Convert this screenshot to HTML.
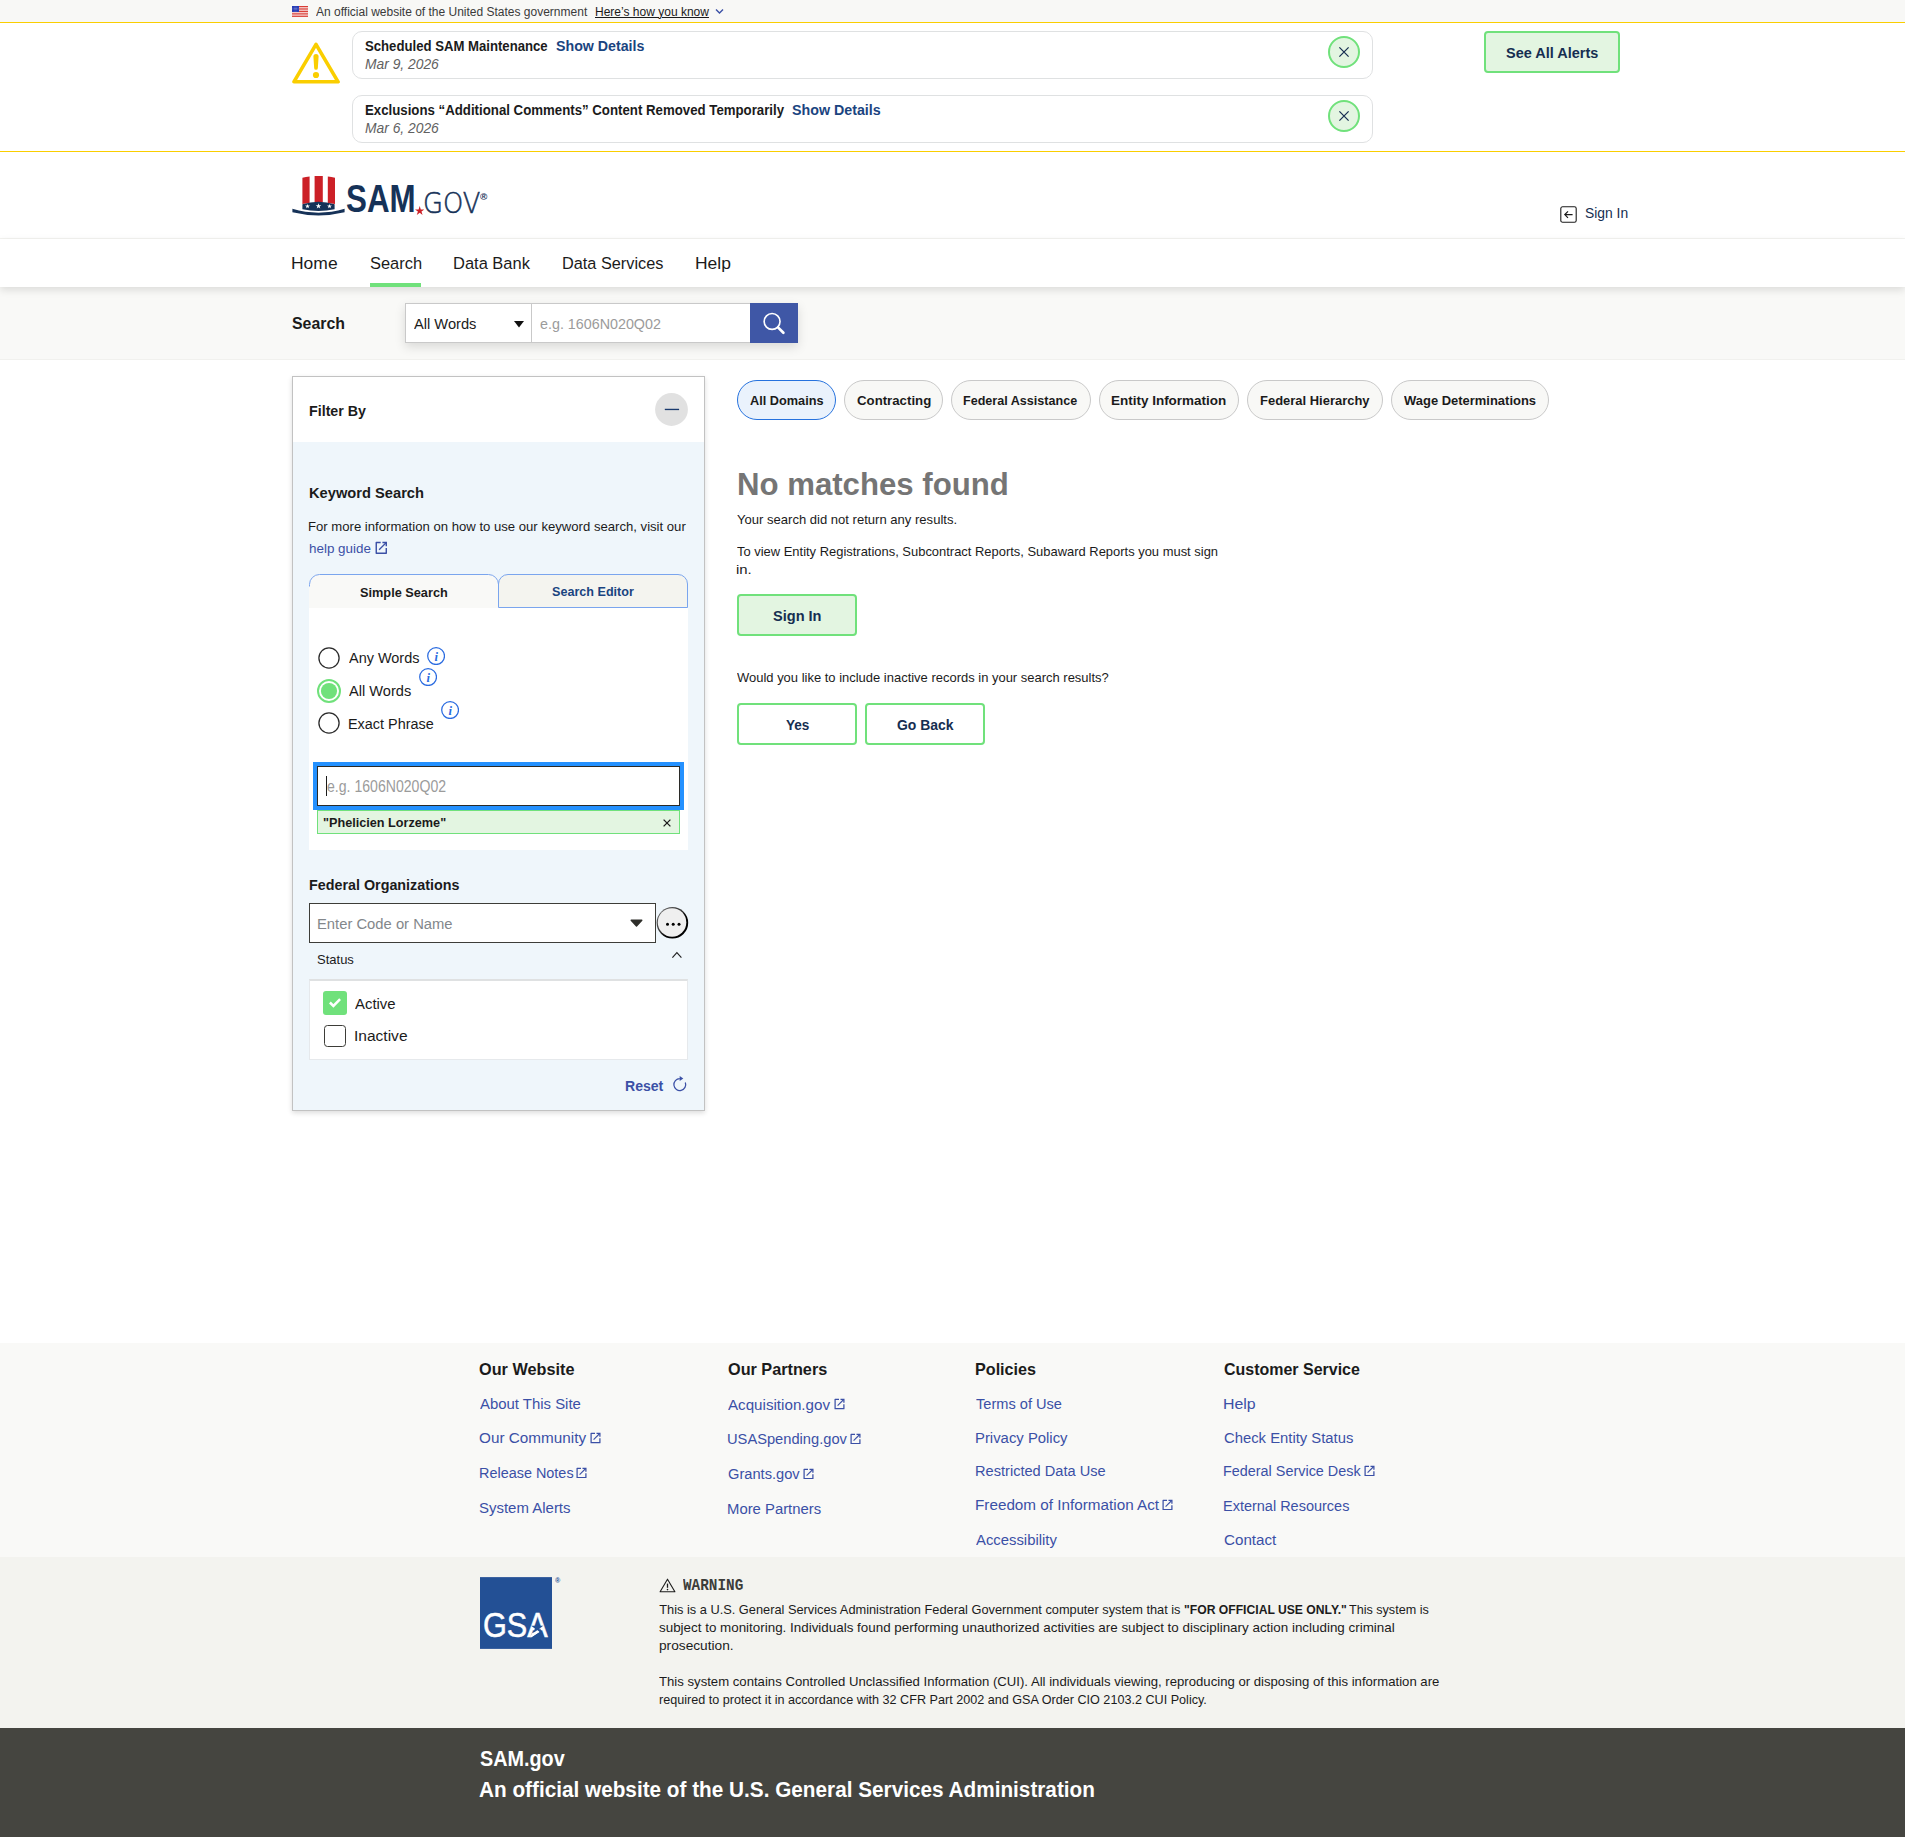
<!DOCTYPE html>
<html lang="en">
<head>
<meta charset="utf-8">
<title>SAM.gov | Search</title>
<style>
html,body{margin:0;padding:0}
body{width:1905px;height:1837px;position:relative;overflow:hidden;background:#fff;font-family:"Liberation Sans", sans-serif;color:#1b1b1b}
.b{position:absolute;box-sizing:border-box;display:block}
.t{position:absolute;white-space:nowrap;transform-origin:0 0;line-height:1.2;display:block;margin:0;padding:0}
a{text-decoration:none;color:inherit}
</style>
</head>
<body>
<section aria-label="Official government website">
<div class="b" style="left:0px;top:0px;width:1905px;height:22px;background:#f8f8f6"></div>
<svg class="b" style="left:292px;top:6px;" width="16" height="11" viewBox="0 0 16 11"><rect width="16" height="11" fill="#fff"/><rect y="0.00" width="16" height="0.95" fill="#d6322b"/><rect y="1.69" width="16" height="0.95" fill="#d6322b"/><rect y="3.38" width="16" height="0.95" fill="#d6322b"/><rect y="5.08" width="16" height="0.95" fill="#d6322b"/><rect y="6.77" width="16" height="0.95" fill="#d6322b"/><rect y="8.46" width="16" height="0.95" fill="#d6322b"/><rect y="10.15" width="16" height="0.95" fill="#d6322b"/><rect width="7" height="6" fill="#1e33b1"/><circle cx="1.00" cy="1.00" r="0.3" fill="#fff"/><circle cx="1.00" cy="2.35" r="0.3" fill="#fff"/><circle cx="1.00" cy="3.70" r="0.3" fill="#fff"/><circle cx="1.00" cy="5.05" r="0.3" fill="#fff"/><circle cx="2.25" cy="1.00" r="0.3" fill="#fff"/><circle cx="2.25" cy="2.35" r="0.3" fill="#fff"/><circle cx="2.25" cy="3.70" r="0.3" fill="#fff"/><circle cx="2.25" cy="5.05" r="0.3" fill="#fff"/><circle cx="3.50" cy="1.00" r="0.3" fill="#fff"/><circle cx="3.50" cy="2.35" r="0.3" fill="#fff"/><circle cx="3.50" cy="3.70" r="0.3" fill="#fff"/><circle cx="3.50" cy="5.05" r="0.3" fill="#fff"/><circle cx="4.75" cy="1.00" r="0.3" fill="#fff"/><circle cx="4.75" cy="2.35" r="0.3" fill="#fff"/><circle cx="4.75" cy="3.70" r="0.3" fill="#fff"/><circle cx="4.75" cy="5.05" r="0.3" fill="#fff"/><circle cx="6.00" cy="1.00" r="0.3" fill="#fff"/><circle cx="6.00" cy="2.35" r="0.3" fill="#fff"/><circle cx="6.00" cy="3.70" r="0.3" fill="#fff"/><circle cx="6.00" cy="5.05" r="0.3" fill="#fff"/></svg>
<svg class="b" style="left:714.5px;top:8px;" width="9" height="7" viewBox="0 0 9 7"><path d="M1 1.5l3.5 3.5 3.5-3.5" fill="none" stroke="#3b50a6" stroke-width="1.4"/></svg>
<span class="t" style="left:316.18px;top:4.75px;font-size:12.5px;color:#3a3a3a;transform:scaleX(0.9598);">An official website of the United States government</span>
<span class="t" style="left:594.61px;top:4.75px;font-size:12.5px;transform:scaleX(0.9609);text-decoration:underline;text-underline-offset:1px;">Here’s how you know</span>
</section>
<section aria-label="Alerts">
<div class="b" style="left:0px;top:22px;width:1905px;height:130px;background:#fff;border-top:1px solid #face00;border-bottom:1px solid #face00"></div>
<svg class="b" style="left:292px;top:42px;" width="48" height="42" viewBox="0 0 48 42"><path d="M24 2.3 46.1 39.8H1.9Z" fill="none" stroke="#face00" stroke-width="3.6" stroke-linejoin="round"/><path d="M21.4 14.6a2.6 2.6 0 0 1 5.2 0l-.75 11.4a1.85 1.85 0 0 1-3.7 0z" fill="#face00"/><circle cx="24" cy="33" r="3.1" fill="#face00"/></svg>
<div class="b" style="left:352px;top:31px;width:1021px;height:48px;border:1px solid #dfe1e2;border-radius:10px;background:#fff"></div>
<div class="b" style="left:352px;top:95px;width:1021px;height:48px;border:1px solid #dfe1e2;border-radius:10px;background:#fff"></div>
<svg class="b" style="left:1328px;top:36px;" width="32" height="32" viewBox="0 0 32 32"><circle cx="16" cy="16" r="15" fill="#e3f5e1" stroke="#70e17b" stroke-width="2"/><path d="M11.4 11.4l9.2 9.2M20.6 11.4l-9.2 9.2" stroke="#162e51" stroke-width="1.25" fill="none"/></svg>
<svg class="b" style="left:1328px;top:100px;" width="32" height="32" viewBox="0 0 32 32"><circle cx="16" cy="16" r="15" fill="#e3f5e1" stroke="#70e17b" stroke-width="2"/><path d="M11.4 11.4l9.2 9.2M20.6 11.4l-9.2 9.2" stroke="#162e51" stroke-width="1.25" fill="none"/></svg>
<div class="b" style="left:1484px;top:31px;width:136px;height:42px;border:2px solid #70e17b;border-radius:4px;background:#e3f5e1"></div>
<span class="t" style="left:365.32px;top:37.75px;font-size:14.0px;font-weight:700;transform:scaleX(0.9390);">Scheduled SAM Maintenance</span>
<span class="t" style="left:556.19px;top:37.75px;font-size:14.0px;font-weight:700;color:#1a4480;transform:scaleX(1.0144);">Show Details</span>
<span class="t" style="left:364.87px;top:55.00px;font-size:15.2px;color:#616161;font-style:italic;transform:scaleX(0.9107);">Mar 9, 2026</span>
<span class="t" style="left:364.81px;top:101.75px;font-size:14.0px;font-weight:700;transform:scaleX(0.9457);">Exclusions “Additional Comments” Content Removed Temporarily</span>
<span class="t" style="left:792.39px;top:101.75px;font-size:14.0px;font-weight:700;color:#1a4480;transform:scaleX(1.0178);">Show Details</span>
<span class="t" style="left:364.87px;top:118.90px;font-size:15.2px;color:#616161;font-style:italic;transform:scaleX(0.9107);">Mar 6, 2026</span>
<span class="t" style="left:1506.28px;top:44.90px;font-size:14.2px;font-weight:700;color:#162e51;transform:scaleX(1.0209);">See All Alerts</span>
</section>
<header>
<svg class="b" style="left:292px;top:175px;" width="53" height="41" viewBox="0 0 53 41"><path d="M10.4 29V2.7Q13.8 1.8 17.6 1.4V28Z" fill="#cc2027"/><path d="M22.6 27.5V1.1Q26.7 0.8 30.8 1.1V27.5Z" fill="#cc2027"/><path d="M35.8 28V1.4Q39.6 1.8 43 2.7V29Z" fill="#cc2027"/><path d="M10.4 34.2V29.2Q26.5 24.2 42.6 29.2V34.2Q26.5 37.6 10.4 34.2Z" fill="#163258"/><path d="M0.4 33.8Q26.5 41.5 52.6 33.8V37.3Q26.5 43.6 0.4 37.3Z" fill="#163258"/><g fill="#fff"><path d="M15.5 28.9l.6 1.7h1.8l-1.45 1.05.55 1.7-1.5-1.05-1.5 1.05.55-1.7L13.1 30.6h1.8z"/><path d="M26.5 28.3l.7 2h2.1l-1.7 1.2.65 2-1.75-1.25-1.75 1.25.65-2-1.7-1.2h2.1z"/><path d="M37.5 28.9l.6 1.7h1.8l-1.45 1.05.55 1.7-1.5-1.05-1.5 1.05.55-1.7-1.45-1.05h1.8z"/></g></svg>
<svg class="b" style="left:415px;top:206.4px;" width="9.4" height="9" viewBox="0 0 9.4 9"><path d="M4.7 0l1.1 3.4h3.6L6.5 5.5l1.1 3.4L4.7 6.8 1.8 8.9l1.1-3.4L0 3.4h3.6z" fill="#cc2027"/></svg>
<svg class="b" style="left:1560px;top:206px;" width="17" height="17" viewBox="0 0 17 17"><rect x="0.8" y="0.8" width="15.4" height="15.4" rx="1.8" fill="none" stroke="#1b1b1b" stroke-width="1.1"/><path d="M12.6 8.6H5M8 5.4 4.8 8.6 8 11.8" fill="none" stroke="#1b1b1b" stroke-width="1.2"/></svg>
<div class="b" style="left:0px;top:238px;width:1905px;height:1px;background:#f4f4f1"></div>
<span class="t" style="left:346.3px;top:176.20px;font-size:38.2px;font-weight:700;color:#163258;transform:scaleX(0.8202);">SAM</span>
<span class="t" style="left:423.25px;top:185.60px;font-size:29.2px;font-weight:200;color:#163258;font-family:'DejaVu Sans Light','DejaVu Sans',sans-serif;transform:scaleX(0.8826);-webkit-text-stroke:0.55px #163258;">GOV</span>
<span class="t" style="left:479.85px;top:190.80px;font-size:9.5px;font-weight:700;color:#163258;transform:scaleX(1.0436);">®</span>
<span class="t" style="left:1585.37px;top:204.60px;font-size:14.8px;color:#162e51;transform:scaleX(0.9360);">Sign In</span>
</header>
<nav>
<div class="b" style="left:0px;top:287px;width:1905px;height:73px;background:#f9f9f7;border-bottom:1px solid #f1f1ee"></div>
<div class="b" style="left:0px;top:239px;width:1905px;height:48px;background:#fff;box-shadow:0 3px 8px rgba(0,0,0,.12)"></div>
<div class="b" style="left:370px;top:283px;width:50.6px;height:4px;background:#70e17b"></div>
<a class="t" style="left:291.42px;top:253.70px;font-size:17.1px;transform:scaleX(1.0219);">Home</a>
<a class="t" style="left:369.55px;top:253.70px;font-size:17.1px;transform:scaleX(0.9620);">Search</a>
<a class="t" style="left:452.85px;top:253.70px;font-size:17.1px;transform:scaleX(0.9637);">Data Bank</a>
<a class="t" style="left:561.96px;top:253.70px;font-size:17.1px;transform:scaleX(0.9532);">Data Services</a>
<a class="t" style="left:694.97px;top:253.70px;font-size:17.1px;transform:scaleX(1.0201);">Help</a>
</nav>
<form role="search">
<div class="b" style="left:405px;top:303px;width:393px;height:40px;background:#fff;box-shadow:0 4px 10px rgba(0,0,0,.13)"></div>
<div class="b" style="left:405px;top:303px;width:127px;height:40px;background:#fff;border:1px solid #c9c9c9"></div>
<div class="b" style="left:531px;top:303px;width:220px;height:40px;background:#fff;border:1px solid #c9c9c9"></div>
<div class="b" style="left:750px;top:303px;width:48px;height:40px;background:#3f57a6"></div>
<svg class="b" style="left:514px;top:321.4px;" width="10" height="6.4" viewBox="0 0 10 6.4"><path d="M0 0h10L5 6.4z" fill="#111"/></svg>
<svg class="b" style="left:762px;top:312px;" width="24" height="24" viewBox="0 0 24 24"><circle cx="10.08" cy="9.46" r="7.95" fill="none" stroke="#fff" stroke-width="1.65"/><path d="M16 15.4l5.4 5.4" stroke="#fff" stroke-width="2.7" stroke-linecap="round"/></svg>
<span class="t" style="left:292.34px;top:313.55px;font-size:17.1px;font-weight:700;transform:scaleX(0.9286);">Search</span>
<span class="t" style="left:414.07px;top:315.55px;font-size:14.8px;transform:scaleX(0.9907);">All Words</span>
<span class="t" style="left:539.59px;top:315.55px;font-size:14.8px;color:#9b9b9b;transform:scaleX(0.9669);">e.g. 1606N020Q02</span>
</form>
<aside>
<div class="b" style="left:292px;top:376px;width:413px;height:735px;background:#eff6fb;border:1px solid #c2c2c2;box-shadow:0 2px 5px rgba(0,0,0,.14)"></div>
<div class="b" style="left:293px;top:377px;width:411px;height:65px;background:#fff"></div>
<svg class="b" style="left:655px;top:393px;" width="33" height="33" viewBox="0 0 33 33"><circle cx="16.5" cy="16.5" r="16.4" fill="#e1e1e1"/><path d="M9.8 16.45h14.3" stroke="#1a3a6e" stroke-width="1.35"/></svg>
<svg class="b" style="left:374.74px;top:541.3px;" width="12.54" height="13.22" viewBox="0 0 11 11.6"><path d="M5 1.26H1.1V10.7H9.9V6.2" fill="none" stroke="#3b50a6" stroke-width="1.25" stroke-linejoin="round"/><path d="M6.5 1.26H9.9V4.7" fill="none" stroke="#3b50a6" stroke-width="1.25"/><path d="M9.7 1.5 3.6 7.7" fill="none" stroke="#3b50a6" stroke-width="1.1"/></svg>
<div class="b" style="left:309px;top:574px;width:190px;height:34px;background:#f9f9f7;border-radius:10px 10px 0 0"></div>
<svg class="b" style="left:309px;top:574px;" width="190" height="14" viewBox="0 0 190 14"><path d="M0.5 12.5V10.5A10 10 0 0 1 10.5 0.5H179.5A10 10 0 0 1 189.5 10.5V12.5" fill="none" stroke="#7aa5ee" stroke-width="1"/></svg>
<div class="b" style="left:498px;top:574px;width:190px;height:34px;background:#f4f4ef;border:1px solid #7aa5ee;border-radius:10px 10px 0 0"></div>
<div class="b" style="left:309px;top:608px;width:379px;height:242px;background:#fff"></div>
<svg class="b" style="left:317px;top:645.8px;" width="24" height="24" viewBox="0 0 24 24"><circle cx="12" cy="12" r="10.1" fill="#fff" stroke="#2b2b2b" stroke-width="1.3"/></svg>
<svg class="b" style="left:317px;top:679px;" width="24" height="24" viewBox="0 0 24 24"><circle cx="12" cy="12" r="11" fill="#fff" stroke="#70e17b" stroke-width="2"/><circle cx="12" cy="12" r="8.1" fill="#70e17b"/></svg>
<svg class="b" style="left:317px;top:711.4px;" width="24" height="24" viewBox="0 0 24 24"><circle cx="12" cy="12" r="10.1" fill="#fff" stroke="#2b2b2b" stroke-width="1.3"/></svg>
<svg class="b" style="left:427.1px;top:647.1px;" width="18.2" height="18.2" viewBox="0 0 18.2 18.2"><circle cx="9.1" cy="9.1" r="8.4" fill="none" stroke="#2a6be0" stroke-width="1.25"/><text x="9.25" y="13.6" text-anchor="middle" font-family="Liberation Serif, serif" font-style="italic" font-weight="bold" font-size="12.6" fill="#2a6be0">i</text></svg>
<svg class="b" style="left:419.1px;top:667.9px;" width="18.2" height="18.2" viewBox="0 0 18.2 18.2"><circle cx="9.1" cy="9.1" r="8.4" fill="none" stroke="#2a6be0" stroke-width="1.25"/><text x="9.25" y="13.6" text-anchor="middle" font-family="Liberation Serif, serif" font-style="italic" font-weight="bold" font-size="12.6" fill="#2a6be0">i</text></svg>
<svg class="b" style="left:441px;top:700.8px;" width="18.2" height="18.2" viewBox="0 0 18.2 18.2"><circle cx="9.1" cy="9.1" r="8.4" fill="none" stroke="#2a6be0" stroke-width="1.25"/><text x="9.25" y="13.6" text-anchor="middle" font-family="Liberation Serif, serif" font-style="italic" font-weight="bold" font-size="12.6" fill="#2a6be0">i</text></svg>
<div class="b" style="left:313px;top:762px;width:371px;height:48px;background:#2491ff"></div>
<div class="b" style="left:317px;top:766px;width:363px;height:40px;background:#fff;border:1px solid #2b2b28"></div>
<div class="b" style="left:326px;top:776px;width:1px;height:20px;background:#1b1b1b"></div>
<div class="b" style="left:317px;top:810px;width:363px;height:24px;background:#e3f5e1;border:1px solid #70e17b"></div>
<svg class="b" style="left:663.2px;top:819.2px;" width="8" height="8" viewBox="0 0 8 8"><path d="M0.6 0.6l6.8 6.8M7.4 0.6l-6.8 6.8" stroke="#1b1b1b" stroke-width="1.3"/></svg>
<div class="b" style="left:309px;top:903px;width:347px;height:40px;background:#fff;border:1px solid #3d3d38"></div>
<svg class="b" style="left:629.6px;top:918.8px;" width="13" height="8.4" viewBox="0 0 13 8.4"><path d="M1.2 1.2h10.6L6.5 7z" fill="#2e2e2a" stroke="#2e2e2a" stroke-width="1.4" stroke-linejoin="round"/></svg>
<svg class="b" style="left:655px;top:905px;" width="36" height="36" viewBox="0 0 36 36"><defs><linearGradient id="rg" x1="0" y1="0" x2="1" y2="1"><stop offset="0" stop-color="#777"/><stop offset=".45" stop-color="#333"/><stop offset=".6" stop-color="#000"/></linearGradient></defs><circle cx="17.4" cy="17.8" r="15.8" fill="url(#rg)"/><circle cx="17.05" cy="17.45" r="14.25" fill="#efefef"/><circle cx="12.5" cy="19.2" r="1.5" fill="#000"/><circle cx="18.2" cy="19.2" r="1.5" fill="#000"/><circle cx="24" cy="19.2" r="1.5" fill="#000"/></svg>
<svg class="b" style="left:670.5px;top:951px;" width="12" height="8" viewBox="0 0 12 8"><path d="M1.4 6.7l4.5-5 4.5 5" fill="none" stroke="#222" stroke-width="1.15"/></svg>
<div class="b" style="left:309px;top:979px;width:379px;height:81px;background:#fff;border:1px solid #e6e9ec;border-top:2px solid #dfe1e2"></div>
<div class="b" style="left:323px;top:991px;width:24px;height:24px;background:#70e17b;border-radius:3px"></div>
<svg class="b" style="left:323px;top:991px;" width="24" height="24" viewBox="0 0 24 24"><path d="M6.9 11.5l3.5 3.4 6.7-6.8" fill="none" stroke="#fff" stroke-width="2.5"/></svg>
<div class="b" style="left:324px;top:1025px;width:22px;height:22px;background:#fff;border:1.6px solid #3d3d38;border-radius:3.5px"></div>
<svg class="b" style="left:672px;top:1075px;" width="16" height="18" viewBox="0 0 16 18"><path d="M7.8 3.7A5.9 5.9 0 1 0 13.34 7.58" fill="none" stroke="#3b50a6" stroke-width="1.25"/><path d="M7.7 1.1l3.6 2.5-3.6 2.5z" fill="#3b50a6"/></svg>
<span class="t" style="left:308.65px;top:402.80px;font-size:14.8px;font-weight:700;transform:scaleX(0.9633);">Filter By</span>
<span class="t" style="left:308.62px;top:485.10px;font-size:14.8px;font-weight:700;transform:scaleX(0.9916);">Keyword Search</span>
<span class="t" style="left:308.22px;top:519.30px;font-size:12.8px;transform:scaleX(1.0254);">For more information on how to use our keyword search, visit our</span>
<a class="t" style="left:308.67px;top:541.20px;font-size:12.8px;color:#3b50a6;transform:scaleX(1.0485);">help guide</a>
<span class="t" style="left:359.73px;top:584.60px;font-size:12.8px;font-weight:700;transform:scaleX(0.9949);">Simple Search</span>
<span class="t" style="left:552.14px;top:583.50px;font-size:12.8px;font-weight:700;color:#1a4480;transform:scaleX(0.9836);">Search Editor</span>
<span class="t" style="left:349.17px;top:648.70px;font-size:15.3px;transform:scaleX(0.9453);">Any Words</span>
<span class="t" style="left:349.17px;top:681.70px;font-size:15.3px;transform:scaleX(0.9553);">All Words</span>
<span class="t" style="left:348.02px;top:714.80px;font-size:15.3px;transform:scaleX(0.9422);">Exact Phrase</span>
<span class="t" style="left:326.7px;top:778.00px;font-size:15.6px;color:#9b9b9b;transform:scaleX(0.9037);">e.g. 1606N020Q02</span>
<span class="t" style="left:322.77px;top:814.80px;font-size:13.3px;font-weight:700;transform:scaleX(0.9520);">"Phelicien Lorzeme"</span>
<span class="t" style="left:308.64px;top:877.30px;font-size:14.8px;font-weight:700;transform:scaleX(0.9681);">Federal Organizations</span>
<span class="t" style="left:316.89px;top:914.50px;font-size:15.1px;color:#83878b;transform:scaleX(0.9793);">Enter Code or Name</span>
<span class="t" style="left:316.81px;top:951.90px;font-size:12.8px;transform:scaleX(1.0160);">Status</span>
<span class="t" style="left:355.17px;top:994.90px;font-size:15.3px;transform:scaleX(0.9744);">Active</span>
<span class="t" style="left:354.27px;top:1026.90px;font-size:15.3px;transform:scaleX(1.0153);">Inactive</span>
<span class="t" style="left:624.76px;top:1077.60px;font-size:14.0px;font-weight:700;color:#3b50a6;transform:scaleX(1.0045);">Reset</span>
</aside>
<main>
<div class="b" style="left:737px;top:380px;width:99px;height:40px;background:#eaf2fc;border:1px solid #2672de;border-radius:20px"></div>
<div class="b" style="left:844px;top:380px;width:99px;height:40px;background:#f8f8f6;border:1px solid #c9c9c9;border-radius:20px"></div>
<div class="b" style="left:951px;top:380px;width:140px;height:40px;background:#f8f8f6;border:1px solid #c9c9c9;border-radius:20px"></div>
<div class="b" style="left:1099px;top:380px;width:140px;height:40px;background:#f8f8f6;border:1px solid #c9c9c9;border-radius:20px"></div>
<div class="b" style="left:1246.6px;top:380px;width:136px;height:40px;background:#f8f8f6;border:1px solid #c9c9c9;border-radius:20px"></div>
<div class="b" style="left:1390.7px;top:380px;width:158px;height:40px;background:#f8f8f6;border:1px solid #c9c9c9;border-radius:20px"></div>
<div class="b" style="left:737px;top:594px;width:120px;height:42px;border:2px solid #70e17b;border-radius:4px;background:#e3f5e1"></div>
<div class="b" style="left:737px;top:703px;width:120px;height:42px;border:2px solid #70e17b;border-radius:4px;background:#fff"></div>
<div class="b" style="left:865px;top:703px;width:120px;height:42px;border:2px solid #70e17b;border-radius:4px;background:#fff"></div>
<span class="t" style="left:749.98px;top:392.90px;font-size:12.8px;font-weight:700;transform:scaleX(0.9944);">All Domains</span>
<span class="t" style="left:856.86px;top:392.90px;font-size:12.8px;font-weight:700;transform:scaleX(1.0336);">Contracting</span>
<span class="t" style="left:963.46px;top:392.90px;font-size:12.8px;font-weight:700;transform:scaleX(0.9826);">Federal Assistance</span>
<span class="t" style="left:1111.3px;top:392.90px;font-size:12.8px;font-weight:700;transform:scaleX(1.0525);">Entity Information</span>
<span class="t" style="left:1259.83px;top:392.90px;font-size:12.8px;font-weight:700;transform:scaleX(1.0131);">Federal Hierarchy</span>
<span class="t" style="left:1403.89px;top:392.90px;font-size:12.8px;font-weight:700;transform:scaleX(1.0128);">Wage Determinations</span>
<h1 class="t" style="left:737.32px;top:465.10px;font-size:31.8px;font-weight:700;color:#757575;transform:scaleX(0.9801);">No matches found</h1>
<span class="t" style="left:737.11px;top:511.70px;font-size:12.8px;transform:scaleX(1.0199);">Your search did not return any results.</span>
<span class="t" style="left:737.11px;top:543.90px;font-size:12.8px;transform:scaleX(1.0109);">To view Entity Registrations, Subcontract Reports, Subaward Reports you must sign</span>
<span class="t" style="left:736.4px;top:561.70px;font-size:12.8px;transform:scaleX(1.1662);">in.</span>
<span class="t" style="left:773.28px;top:607.90px;font-size:14.2px;font-weight:700;color:#162e51;transform:scaleX(1.0259);">Sign In</span>
<span class="t" style="left:737.34px;top:670.00px;font-size:12.8px;transform:scaleX(1.0135);">Would you like to include inactive records in your search results?</span>
<span class="t" style="left:785.77px;top:717.10px;font-size:14.2px;font-weight:700;color:#162e51;transform:scaleX(0.9559);">Yes</span>
<span class="t" style="left:896.73px;top:717.10px;font-size:14.2px;font-weight:700;color:#162e51;transform:scaleX(0.9826);">Go Back</span>
</main>
<footer>
<div class="b" style="left:0px;top:1343px;width:1905px;height:214px;background:#f9f9f7"></div>
<div class="b" style="left:0px;top:1557px;width:1905px;height:171px;background:#f3f3ef"></div>
<div class="b" style="left:0px;top:1728px;width:1905px;height:109px;background:#454540"></div>
<svg class="b" style="left:589.8px;top:1432.0px;" width="11.0" height="11.6" viewBox="0 0 11 11.6"><path d="M5 1.26H1.1V10.7H9.9V6.2" fill="none" stroke="#3b50a6" stroke-width="1.25" stroke-linejoin="round"/><path d="M6.5 1.26H9.9V4.7" fill="none" stroke="#3b50a6" stroke-width="1.25"/><path d="M9.7 1.5 3.6 7.7" fill="none" stroke="#3b50a6" stroke-width="1.1"/></svg>
<svg class="b" style="left:576.0px;top:1466.9px;" width="11.0" height="11.6" viewBox="0 0 11 11.6"><path d="M5 1.26H1.1V10.7H9.9V6.2" fill="none" stroke="#3b50a6" stroke-width="1.25" stroke-linejoin="round"/><path d="M6.5 1.26H9.9V4.7" fill="none" stroke="#3b50a6" stroke-width="1.25"/><path d="M9.7 1.5 3.6 7.7" fill="none" stroke="#3b50a6" stroke-width="1.1"/></svg>
<svg class="b" style="left:833.9px;top:1398.4px;" width="11.0" height="11.6" viewBox="0 0 11 11.6"><path d="M5 1.26H1.1V10.7H9.9V6.2" fill="none" stroke="#3b50a6" stroke-width="1.25" stroke-linejoin="round"/><path d="M6.5 1.26H9.9V4.7" fill="none" stroke="#3b50a6" stroke-width="1.25"/><path d="M9.7 1.5 3.6 7.7" fill="none" stroke="#3b50a6" stroke-width="1.1"/></svg>
<svg class="b" style="left:850.2px;top:1432.8px;" width="11.0" height="11.6" viewBox="0 0 11 11.6"><path d="M5 1.26H1.1V10.7H9.9V6.2" fill="none" stroke="#3b50a6" stroke-width="1.25" stroke-linejoin="round"/><path d="M6.5 1.26H9.9V4.7" fill="none" stroke="#3b50a6" stroke-width="1.25"/><path d="M9.7 1.5 3.6 7.7" fill="none" stroke="#3b50a6" stroke-width="1.1"/></svg>
<svg class="b" style="left:802.9px;top:1467.7px;" width="11.0" height="11.6" viewBox="0 0 11 11.6"><path d="M5 1.26H1.1V10.7H9.9V6.2" fill="none" stroke="#3b50a6" stroke-width="1.25" stroke-linejoin="round"/><path d="M6.5 1.26H9.9V4.7" fill="none" stroke="#3b50a6" stroke-width="1.25"/><path d="M9.7 1.5 3.6 7.7" fill="none" stroke="#3b50a6" stroke-width="1.1"/></svg>
<svg class="b" style="left:1162.2px;top:1498.9px;" width="11.0" height="11.6" viewBox="0 0 11 11.6"><path d="M5 1.26H1.1V10.7H9.9V6.2" fill="none" stroke="#3b50a6" stroke-width="1.25" stroke-linejoin="round"/><path d="M6.5 1.26H9.9V4.7" fill="none" stroke="#3b50a6" stroke-width="1.25"/><path d="M9.7 1.5 3.6 7.7" fill="none" stroke="#3b50a6" stroke-width="1.1"/></svg>
<svg class="b" style="left:1363.8px;top:1464.8px;" width="11.0" height="11.6" viewBox="0 0 11 11.6"><path d="M5 1.26H1.1V10.7H9.9V6.2" fill="none" stroke="#3b50a6" stroke-width="1.25" stroke-linejoin="round"/><path d="M6.5 1.26H9.9V4.7" fill="none" stroke="#3b50a6" stroke-width="1.25"/><path d="M9.7 1.5 3.6 7.7" fill="none" stroke="#3b50a6" stroke-width="1.1"/></svg>
<svg class="b" style="left:480px;top:1577px;" width="72" height="72" viewBox="85 105 1525 1520"><rect x="85" y="105" width="1525" height="1520" fill="#235095"/></svg>
<svg class="b" style="left:480px;top:1577px;z-index:3" width="72" height="72" viewBox="69 105 1525 1520"><path d="M1128 1376 1168 1376 1338 1266 1300 1222 1172 1296Z" fill="#fff"/><path d="M1280 1040l30 93h98l-79 58 30 93-79-57-79 57 30-93-79-58h98z" fill="#235095"/><path d="M1168 1377 1338 1266 1345 1190 1420 1377Z" fill="#235095"/></svg>
<svg class="b" style="left:658.8px;top:1578px;" width="17" height="14.6" viewBox="0 0 17 14.6"><path d="M8.5 1.2 15.9 13.7H1.1Z" fill="none" stroke="#1b1b1b" stroke-width="1.1" stroke-linejoin="round"/><path d="M8.5 5.6v4.2" stroke="#1b1b1b" stroke-width="1.3"/><circle cx="8.5" cy="11.6" r=".8" fill="#1b1b1b"/></svg>
<span class="t" style="left:479.33px;top:1359.90px;font-size:16.2px;font-weight:700;transform:scaleX(1.0040);">Our Website</span>
<a class="t" style="left:479.97px;top:1395.00px;font-size:15.1px;color:#3b50a6;transform:scaleX(0.9882);">About This Site</a>
<a class="t" style="left:479.28px;top:1429.10px;font-size:15.1px;color:#3b50a6;transform:scaleX(1.0129);">Our Community</a>
<a class="t" style="left:478.82px;top:1464.00px;font-size:15.1px;color:#3b50a6;transform:scaleX(0.9555);">Release Notes</a>
<a class="t" style="left:479.32px;top:1499.00px;font-size:15.1px;color:#3b50a6;transform:scaleX(0.9919);">System Alerts</a>
<span class="t" style="left:727.83px;top:1359.90px;font-size:16.2px;font-weight:700;transform:scaleX(1.0027);">Our Partners</span>
<a class="t" style="left:728.47px;top:1395.50px;font-size:15.1px;color:#3b50a6;transform:scaleX(1.0044);">Acquisition.gov</a>
<a class="t" style="left:727.37px;top:1429.90px;font-size:15.1px;color:#3b50a6;transform:scaleX(0.9718);">USASpending.gov</a>
<a class="t" style="left:727.76px;top:1464.80px;font-size:15.1px;color:#3b50a6;transform:scaleX(0.9710);">Grants.gov</a>
<a class="t" style="left:727.28px;top:1500.00px;font-size:15.1px;color:#3b50a6;transform:scaleX(0.9845);">More Partners</a>
<span class="t" style="left:975.22px;top:1359.90px;font-size:16.2px;font-weight:700;transform:scaleX(0.9977);">Policies</span>
<a class="t" style="left:975.97px;top:1395.00px;font-size:15.1px;color:#3b50a6;transform:scaleX(0.9671);">Terms of Use</a>
<a class="t" style="left:975.08px;top:1428.60px;font-size:15.1px;color:#3b50a6;transform:scaleX(0.9851);">Privacy Policy</a>
<a class="t" style="left:975.1px;top:1461.90px;font-size:15.1px;color:#3b50a6;transform:scaleX(0.9673);">Restricted Data Use</a>
<a class="t" style="left:975.05px;top:1496.00px;font-size:15.1px;color:#3b50a6;transform:scaleX(1.0111);">Freedom of Information Act</a>
<a class="t" style="left:976.27px;top:1531.00px;font-size:15.1px;color:#3b50a6;transform:scaleX(0.9836);">Accessibility</a>
<span class="t" style="left:1223.64px;top:1359.90px;font-size:16.2px;font-weight:700;transform:scaleX(0.9871);">Customer Service</span>
<a class="t" style="left:1223.0px;top:1395.00px;font-size:15.1px;color:#3b50a6;transform:scaleX(1.0523);">Help</a>
<a class="t" style="left:1223.55px;top:1428.60px;font-size:15.1px;color:#3b50a6;transform:scaleX(0.9823);">Check Entity Status</a>
<a class="t" style="left:1223.12px;top:1461.90px;font-size:15.1px;color:#3b50a6;transform:scaleX(0.9540);">Federal Service Desk</a>
<a class="t" style="left:1223.11px;top:1496.90px;font-size:15.1px;color:#3b50a6;transform:scaleX(0.9597);">External Resources</a>
<a class="t" style="left:1223.53px;top:1531.00px;font-size:15.1px;color:#3b50a6;transform:scaleX(1.0048);">Contact</a>
<span class="t" style="left:483.06px;top:1604.90px;font-size:34.4px;color:#fff;transform:scaleX(0.8921);-webkit-text-stroke:0.5px #fff;">GSA</span>
<span class="t" style="left:555.09px;top:1576.80px;font-size:6.5px;font-weight:700;color:#234e94;transform:scaleX(1.0877);">®</span>
<span class="t" style="left:683.4px;top:1577.40px;font-size:16px;font-weight:700;color:#3d3d3a;font-family:'Liberation Mono', monospace;transform:scaleX(0.8972);">WARNING</span>
<span class="t" style="left:659.21px;top:1601.80px;font-size:12.8px;">This is a U.S. General Services Administration Federal Government computer system that is</span>
<span class="t" style="left:1183.6px;top:1601.80px;font-size:12.8px;font-weight:700;transform:scaleX(0.9498);">"FOR OFFICIAL USE ONLY."</span>
<span class="t" style="left:1349.22px;top:1601.80px;font-size:12.8px;transform:scaleX(0.9837);">This system is</span>
<span class="t" style="left:659.13px;top:1619.70px;font-size:12.8px;transform:scaleX(1.0468);">subject to monitoring. Individuals found performing unauthorized activities are subject to disciplinary action including criminal</span>
<span class="t" style="left:658.62px;top:1637.80px;font-size:12.8px;transform:scaleX(1.0705);">prosecution.</span>
<span class="t" style="left:659.2px;top:1674.00px;font-size:12.8px;transform:scaleX(1.0273);">This system contains Controlled Unclassified Information (CUI). All individuals viewing, reproducing or disposing of this information are</span>
<span class="t" style="left:658.66px;top:1691.80px;font-size:12.8px;transform:scaleX(0.9854);">required to protect it in accordance with 32 CFR Part 2002 and GSA Order CIO 2103.2 CUI Policy.</span>
<span class="t" style="left:480.23px;top:1747.45px;font-size:21.3px;font-weight:700;color:#fff;transform:scaleX(0.9292);">SAM.gov</span>
<span class="t" style="left:479.48px;top:1778.30px;font-size:21.3px;font-weight:700;color:#fff;transform:scaleX(0.9740);">An official website of the U.S. General Services Administration</span>
</footer>
</body>
</html>
